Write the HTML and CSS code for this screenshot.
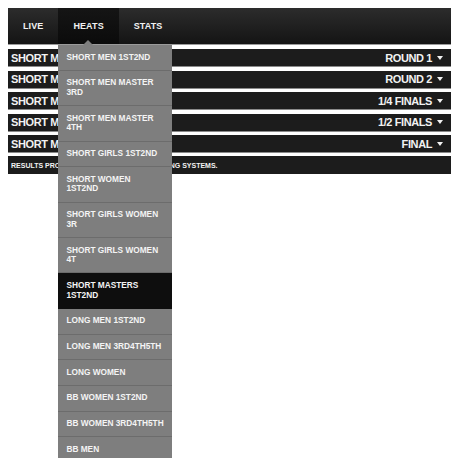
FILE: index.html
```html
<!DOCTYPE html>
<html lang="en">
<head>
  <meta charset="UTF-8">
  <title>Heats</title>
  <link rel="stylesheet" href="styles.css">
</head>
<body>
  <!-- Top navigation -->
  <nav class="topbar">
    <ul class="tabs">
      <li class="tab"><a href="#">LIVE</a></li>
      <li class="tab active">
        <a href="#">HEATS</a>
        <ul class="dropdown">
          <li><a href="#">SHORT MEN 1ST2ND</a></li>
          <li><a href="#">SHORT MEN MASTER<br>3RD</a></li>
          <li><a href="#">SHORT MEN MASTER<br>4TH</a></li>
          <li><a href="#">SHORT GIRLS 1ST2ND</a></li>
          <li><a href="#">SHORT WOMEN<br>1ST2ND</a></li>
          <li><a href="#">SHORT GIRLS WOMEN<br>3R</a></li>
          <li><a href="#">SHORT GIRLS WOMEN<br>4T</a></li>
          <li class="current"><a href="#">SHORT MASTERS<br>1ST2ND</a></li>
          <li><a href="#">LONG MEN 1ST2ND</a></li>
          <li><a href="#">LONG MEN 3RD4TH5TH</a></li>
          <li><a href="#">LONG WOMEN</a></li>
          <li><a href="#">BB WOMEN 1ST2ND</a></li>
          <li><a href="#">BB WOMEN 3RD4TH5TH</a></li>
          <li><a href="#">BB MEN</a></li>
        </ul>
      </li>
      <li class="tab"><a href="#">STATS</a></li>
    </ul>
  </nav>

  <!-- Heat rows -->
  <main class="rows">
    <div class="row">
      <span class="row-name">SHORT MEN 1ST2ND</span>
      <span class="row-round">ROUND 1 <i class="caret"></i></span>
    </div>
    <div class="row">
      <span class="row-name">SHORT MEN 1ST2ND</span>
      <span class="row-round">ROUND 2 <i class="caret"></i></span>
    </div>
    <div class="row">
      <span class="row-name">SHORT MEN 1ST2ND</span>
      <span class="row-round">1/4 FINALS <i class="caret"></i></span>
    </div>
    <div class="row">
      <span class="row-name">SHORT MEN 1ST2ND</span>
      <span class="row-round">1/2 FINALS <i class="caret"></i></span>
    </div>
    <div class="row">
      <span class="row-name">SHORT MEN 1ST2ND</span>
      <span class="row-round">FINAL <i class="caret"></i></span>
    </div>
  </main>

  <footer class="credits">
    <p>RESULTS PROVIDED BY PRIORITY LIVE SCORING SYSTEMS.</p>
  </footer>
</body>
</html>
```

FILE: styles.css
```css
/* General */
body {
  margin: 8px;
  min-height: 450px;
  font-family: "Liberation Sans", Arial, Helvetica, sans-serif;
  font-weight: bold;
  background-color: #fff;
  color: #f2f2f2;
}

a {
  color: inherit;
  text-decoration: none;
}

ul {
  list-style: none;
  margin: 0;
  padding: 0;
}

/* Top bar */
.topbar {
  position: relative;
  z-index: 5;
  height: 36px;
  background: linear-gradient(#2c2c2c, #141414);
  border-bottom: 1px solid #9a9a9a;
}

.tabs {
  display: flex;
  height: 100%;
}

.tab {
  position: relative;
  display: flex;
  align-items: center;
}

.tab > a {
  padding: 0 15px;
  font-size: 9px;
  line-height: 36px;
  letter-spacing: 0.1px;
}

.tab.active {
  background: linear-gradient(#151515, #0b0b0b);
}

/* Dropdown menu */
.dropdown {
  position: absolute;
  top: 37px;
  left: 0;
  width: 114px;
  background-color: #7e7e7e;
  z-index: 10;
}

.dropdown::before {
  content: "";
  position: absolute;
  top: -5px;
  left: 25px;
  border-left: 5px solid transparent;
  border-right: 5px solid transparent;
  border-bottom: 5px solid #7e7e7e;
}

.dropdown li {
  border-bottom: 1px solid #6c6c6c;
}

.dropdown li a {
  display: block;
  padding: 7.5px 3px 7.5px 8px;
  font-size: 8.3px;
  line-height: 9.7px;
  white-space: nowrap;
  color: #f4f4f4;
}

.dropdown li.current {
  background-color: #0e0e0e;
  border-bottom-color: #0e0e0e;
}

/* Rows */
.rows {
  margin-top: 4px;
  display: flex;
  flex-direction: column;
  gap: 3.5px;
}

.row {
  height: 17px;
  display: flex;
  align-items: center;
  justify-content: space-between;
  padding: 0 8px 0 3px;
  background-color: #1c1c1c;
  border-bottom: 1px solid #8a8a8a;
  font-size: 11px;
  letter-spacing: -0.4px;
  white-space: nowrap;
}

.row-round {
  display: flex;
  align-items: center;
  gap: 5px;
}

.caret {
  display: inline-block;
  border-left: 3.5px solid transparent;
  border-right: 3.5px solid transparent;
  border-top: 4px solid #f2f2f2;
}

/* Footer */
.credits {
  margin-top: 3px;
  height: 18px;
  background-color: #1c1c1c;
  display: flex;
  align-items: center;
  padding-left: 3px;
}

.credits p {
  margin: 0;
  font-size: 7px;
}
```
